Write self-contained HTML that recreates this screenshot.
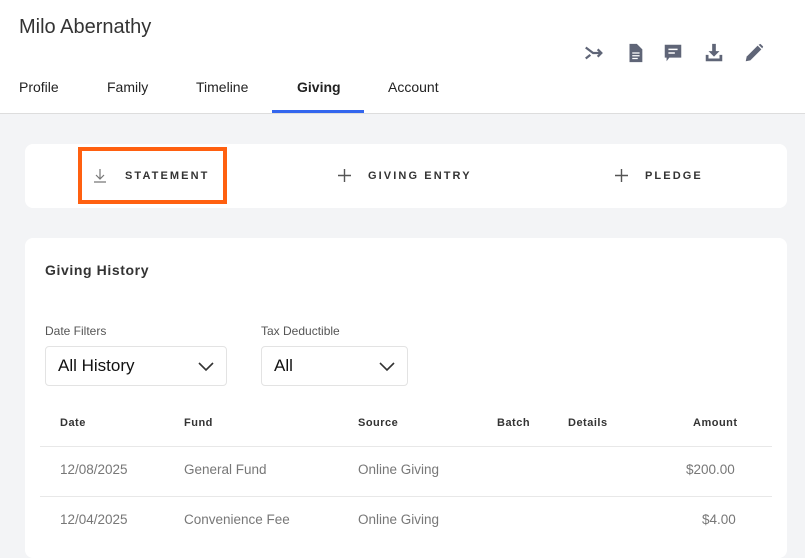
<!DOCTYPE html>
<html><head><style>
*{box-sizing:border-box;margin:0;padding:0}
body{width:805px;height:540px;overflow:hidden;background:#f3f4f6;font-family:"Liberation Sans",sans-serif;position:relative;color:#222}
.hdr{position:absolute;left:0;top:0;width:805px;height:114px;background:#fff;border-bottom:1px solid #ddd}
.name{position:absolute;left:19px;top:16px;font-size:20px;color:#333}
.tab{position:absolute;top:79px;font-size:14px;color:#222}
.ul{position:absolute;left:272px;top:110px;width:92px;height:3px;background:#3366ee}
.icons svg{position:absolute;top:42px}
.card{position:absolute;left:25px;width:762px;background:#fff;border-radius:8px}
.btn{position:absolute;top:170px;font-size:11px;font-weight:bold;letter-spacing:2.1px;color:#333}
.hl{position:absolute;left:78px;top:147px;width:149px;height:57px;border:4px solid #ff6010}
.lbl{position:absolute;top:324px;font-size:12px;color:#555}
.sel{position:absolute;top:346px;height:40px;border:1px solid #e3e3e3;border-radius:4px;font-size:17px;color:#111;padding:9px 12px}
.sel svg{position:absolute;right:12px;top:15px}
.th{position:absolute;top:417px;font-size:11px;font-weight:bold;letter-spacing:.5px;color:#333}
.td{position:absolute;font-size:13.5px;color:#777}
.line{position:absolute;left:40px;width:732px;height:1px;background:#e8e8e8}
</style></head><body>
<div class="hdr">
<div class="name">Milo Abernathy</div>
<div class="tab" style="left:19px">Profile</div>
<div class="tab" style="left:107px">Family</div>
<div class="tab" style="left:196px">Timeline</div>
<div class="tab" style="left:297px;font-weight:bold">Giving</div>
<div class="tab" style="left:388px">Account</div>
<div class="ul"></div>
<div class="icons">
<svg style="left:583px" width="22" height="22" viewBox="0 0 24 24"><path d="M3 6l8 6h9M3 18l5-4M16 8l4 4-4 4" fill="none" stroke="#5f6577" stroke-width="2.4"/></svg>
<svg style="left:624px" width="22" height="22" viewBox="0 0 24 24"><path d="M6 2h8l6 6v14H6z" fill="#5f6577"/><path d="M9 12h8M9 15h8M9 18h6" stroke="#fff" stroke-width="1.4"/></svg>
<svg style="left:662px" width="22" height="22" viewBox="0 0 24 24"><path d="M3 3h18v14H8l-3 4v-4H3z" fill="#5f6577"/><path d="M7 8h10M7 12h7" stroke="#fff" stroke-width="1.6"/></svg>
<svg style="left:703px" width="22" height="22" viewBox="0 0 24 24"><path d="M10 2h4v8h4l-6 6-6-6h4z" fill="#5f6577"/><path d="M3 14h3v4h12v-4h3v7H3z" fill="#5f6577"/></svg>
<svg style="left:743px" width="22" height="22" viewBox="0 0 24 24"><path d="M3 21l1-5L16 4l4 4L8 20z" fill="#5f6577"/><path d="M17 3l2-1 3 3-1 2z" fill="#5f6577"/></svg>
</div>
</div>
<div class="card" style="top:144px;height:64px"></div>
<svg style="position:absolute;left:93px;top:168px" width="14" height="15" viewBox="0 0 14 15"><path d="M7 1v10M3 7l4 4 4-4M1 14h12" stroke="#777" stroke-width="1.2" fill="none"/></svg>
<div class="btn" style="left:125px">STATEMENT</div>
<div class="hl"></div>
<svg style="position:absolute;left:338px;top:169px" width="13" height="13"><path d="M6.5 0v13M0 6.5h13" stroke="#555" stroke-width="1.4"/></svg>
<div class="btn" style="left:368px">GIVING ENTRY</div>
<svg style="position:absolute;left:615px;top:169px" width="13" height="13"><path d="M6.5 0v13M0 6.5h13" stroke="#555" stroke-width="1.4"/></svg>
<div class="btn" style="left:645px">PLEDGE</div>
<div class="card" style="top:238px;height:320px"></div>
<div style="position:absolute;left:45px;top:262px;font-size:14px;font-weight:bold;letter-spacing:.6px;color:#333">Giving History</div>
<div class="lbl" style="left:45px">Date Filters</div>
<div class="lbl" style="left:261px">Tax Deductible</div>
<div class="sel" style="left:45px;width:182px">All History<svg width="16" height="10"><path d="M1 1l7 7 7-7" stroke="#333" stroke-width="1.6" fill="none"/></svg></div>
<div class="sel" style="left:261px;width:147px">All<svg width="16" height="10"><path d="M1 1l7 7 7-7" stroke="#333" stroke-width="1.6" fill="none"/></svg></div>
<div class="th" style="left:60px">Date</div>
<div class="th" style="left:184px">Fund</div>
<div class="th" style="left:358px">Source</div>
<div class="th" style="left:497px">Batch</div>
<div class="th" style="left:568px">Details</div>
<div class="th" style="left:693px">Amount</div>
<div class="line" style="top:446px"></div>
<div class="td" style="left:60px;top:462px">12/08/2025</div>
<div class="td" style="left:184px;top:462px">General Fund</div>
<div class="td" style="left:358px;top:462px">Online Giving</div>
<div class="td" style="left:686px;top:462px">$200.00</div>
<div class="line" style="top:496px"></div>
<div class="td" style="left:60px;top:512px">12/04/2025</div>
<div class="td" style="left:184px;top:512px">Convenience Fee</div>
<div class="td" style="left:358px;top:512px">Online Giving</div>
<div class="td" style="left:702px;top:512px">$4.00</div>
</body></html>
